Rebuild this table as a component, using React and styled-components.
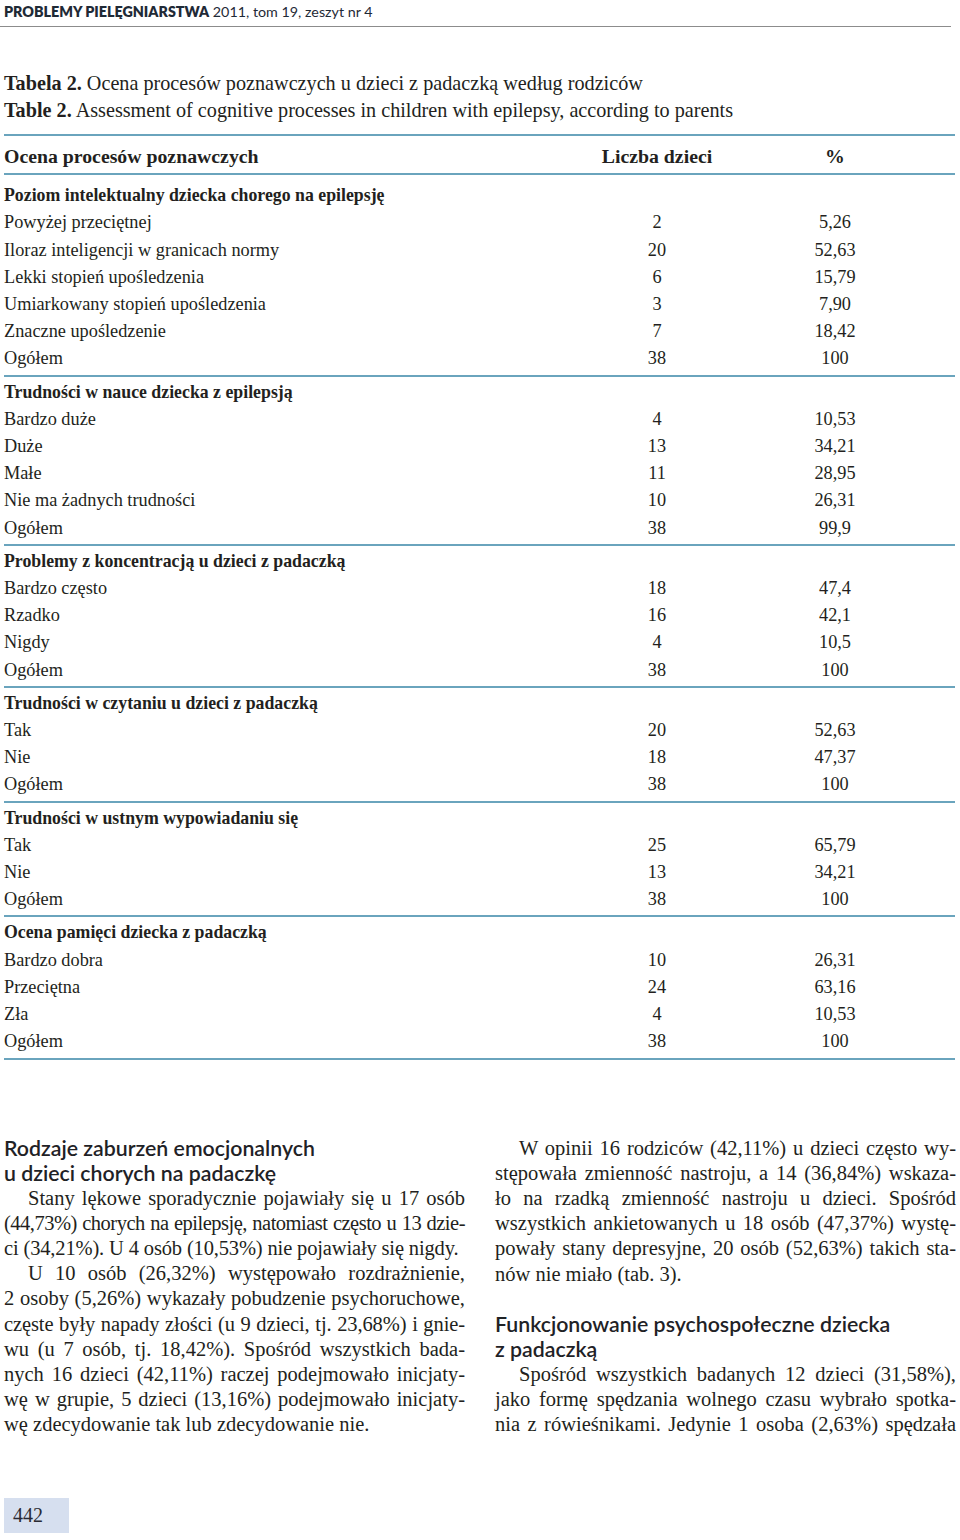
import styled, { createGlobalStyle } from 'styled-components';

const GlobalStyle = createGlobalStyle`
  body {
    margin: 0;
    background: #fff;
    color: #231f20;
    font-family: 'Liberation Serif', 'Times New Roman', serif;
  }
`;

/* Page frame */

const Page = styled.div`
  width: 960px;
  padding: 0 4px 0 4px;
  box-sizing: border-box;
`;

const RunningHead = styled.header`
  height: 27px;
  margin-left: -4px;
  margin-right: 5px;
  padding: 2px 0 0 4px;
  box-sizing: border-box;
  border-bottom: 1px solid #8c8c8c;
  font-family: Lato, 'Noto Sans', sans-serif;
  font-size: 14.3px;
  line-height: 20px;
  color: #1f2a36;

  & b {
    font-weight: 800;
  }
`;

const Caption = styled.div`
  margin: 43px 0 10px;
  font-family: 'Liberation Serif', serif;
  font-size: 20.2px;
  line-height: 27px;

  & b {
    font-weight: 700;
  }
`;

/* Table */

const Table = styled.div`
  border-top: 2px solid #6aa4bd;
  margin-right: 1px;
`;

const Row = styled.div`
  display: grid;
  grid-template-columns: 1fr 178px 178px;
  padding-right: 31px;
  font-size: ${(p) => (p.$bold ? '17.8px' : '18.3px')};
  line-height: 27.2px;
  font-weight: ${(p) => (p.$bold ? 700 : 400)};
`;

const HeadRow = styled(Row)`
  padding-top: 7px;
  padding-bottom: 3px;
  font-size: 19.8px;
  border-bottom: 2px solid #6aa4bd;
`;

const Num = styled.span`
  text-align: center;
`;

const Section = styled.div`
  padding: ${(p) => (p.$first ? '7px' : '2px')} 0 2px;
  border-bottom: 2px solid #6aa4bd;
`;

/* Article text */

const Columns = styled.div`
  display: grid;
  grid-template-columns: 461px 461px;
  column-gap: 30px;
  margin-top: 76px;
`;

const Column = styled.div`
  display: flex;
  flex-direction: column;
`;

const Heading = styled.h3`
  margin: ${(p) => (p.$gap ? '25px' : '0')} 0 0;
  font-family: Lato, 'Noto Sans', sans-serif;
  font-weight: 600;
  font-size: 21.3px;
  line-height: 25px;
  color: #1f2226;
`;

const Para = styled.div`
  font-size: 20.5px;
  line-height: 25.2px;
`;

const Line = styled.div`
  text-align: justify;
  text-align-last: ${(p) => (p.$last ? 'left' : 'justify')};
  text-indent: ${(p) => (p.$indent ? '24px' : '0')};
  letter-spacing: ${(p) => p.$squeeze || 0}px;
  white-space: nowrap;
`;

const PageNo = styled.div`
  margin-top: 60px;
  width: 65px;
  height: 35px;
  padding-left: 9px;
  box-sizing: border-box;
  background: #d6dfef;
  font-family: 'Liberation Serif', serif;
  font-size: 20px;
  line-height: 35px;
  color: #2a2a33;
`;

const sections = [
  {
    title: 'Poziom intelektualny dziecka chorego na epilepsję',
    rows: [
      ['Powyżej przeciętnej', '2', '5,26'],
      ['Iloraz inteligencji w granicach normy', '20', '52,63'],
      ['Lekki stopień upośledzenia', '6', '15,79'],
      ['Umiarkowany stopień upośledzenia', '3', '7,90'],
      ['Znaczne upośledzenie', '7', '18,42'],
      ['Ogółem', '38', '100'],
    ],
  },
  {
    title: 'Trudności w nauce dziecka z epilepsją',
    rows: [
      ['Bardzo duże', '4', '10,53'],
      ['Duże', '13', '34,21'],
      ['Małe', '11', '28,95'],
      ['Nie ma żadnych trudności', '10', '26,31'],
      ['Ogółem', '38', '99,9'],
    ],
  },
  {
    title: 'Problemy z koncentracją u dzieci z padaczką',
    rows: [
      ['Bardzo często', '18', '47,4'],
      ['Rzadko', '16', '42,1'],
      ['Nigdy', '4', '10,5'],
      ['Ogółem', '38', '100'],
    ],
  },
  {
    title: 'Trudności w czytaniu u dzieci z padaczką',
    rows: [
      ['Tak', '20', '52,63'],
      ['Nie', '18', '47,37'],
      ['Ogółem', '38', '100'],
    ],
  },
  {
    title: 'Trudności w ustnym wypowiadaniu się',
    rows: [
      ['Tak', '25', '65,79'],
      ['Nie', '13', '34,21'],
      ['Ogółem', '38', '100'],
    ],
  },
  {
    title: 'Ocena pamięci dziecka z padaczką',
    rows: [
      ['Bardzo dobra', '10', '26,31'],
      ['Przeciętna', '24', '63,16'],
      ['Zła', '4', '10,53'],
      ['Ogółem', '38', '100'],
    ],
  },
];

// a line is either a string or [text, letterSpacing] for lines set tighter
const Paragraph = ({ lines, open = false }) => (
  <Para>
    {lines.map((line, i) => {
      const [text, squeeze] = Array.isArray(line) ? line : [line, 0];
      return (
        <Line
          key={i}
          $indent={i === 0}
          $squeeze={squeeze}
          $last={!open && i === lines.length - 1}
        >
          {text}
        </Line>
      );
    })}
  </Para>
);

export default function App() {
  return (
    <Page>
      <GlobalStyle />
      <RunningHead>
        <b>PROBLEMY PIELĘGNIARSTWA</b> 2011, tom 19, zeszyt nr 4
      </RunningHead>

      <Caption>
        <div>
          <b>Tabela 2.</b> Ocena procesów poznawczych u dzieci z padaczką według rodziców
        </div>
        <div>
          <b>Table 2.</b> Assessment of cognitive processes in children with epilepsy, according to parents
        </div>
      </Caption>

      <Table>
        <HeadRow $bold>
          <span>Ocena procesów poznawczych</span>
          <Num>Liczba dzieci</Num>
          <Num>%</Num>
        </HeadRow>
        {sections.map((s, i) => (
          <Section key={s.title} $first={i === 0}>
            <Row $bold>
              <span>{s.title}</span>
            </Row>
            {s.rows.map(([label, n, pct]) => (
              <Row key={label}>
                <span>{label}</span>
                <Num>{n}</Num>
                <Num>{pct}</Num>
              </Row>
            ))}
          </Section>
        ))}
      </Table>

      <Columns>
        <Column>
          <Heading>
            Rodzaje zaburzeń emocjonalnych
            <br />u dzieci chorych na padaczkę
          </Heading>
          <Paragraph
            lines={[
              'Stany lękowe sporadycznie pojawiały się u 17 osób',
              ['(44,73%) chorych na epilepsję, natomiast często u 13 dzie-', -0.5],
              ['ci (34,21%). U 4 osób (10,53%) nie pojawiały się nigdy.', -0.15],
            ]}
          />
          <Paragraph
            lines={[
              'U 10 osób (26,32%) występowało rozdrażnienie,',
              '2 osoby (5,26%) wykazały pobudzenie psychoruchowe,',
              ['częste były napady złości (u 9 dzieci, tj. 23,68%) i gnie-', -0.1],
              'wu (u 7 osób, tj. 18,42%). Spośród wszystkich bada-',
              'nych 16 dzieci (42,11%) raczej podejmowało inicjaty-',
              'wę w grupie, 5 dzieci (13,16%) podejmowało inicjaty-',
              'wę zdecydowanie tak lub zdecydowanie nie.',
            ]}
          />
        </Column>
        <Column>
          <Paragraph
            lines={[
              'W opinii 16 rodziców (42,11%) u dzieci często wy-',
              'stępowała zmienność nastroju, a 14 (36,84%) wskaza-',
              'ło na rzadką zmienność nastroju u dzieci. Spośród',
              'wszystkich ankietowanych u 18 osób (47,37%) wystę-',
              'powały stany depresyjne, 20 osób (52,63%) takich sta-',
              'nów nie miało (tab. 3).',
            ]}
          />
          <Heading $gap>
            Funkcjonowanie psychospołeczne dziecka
            <br />z padaczką
          </Heading>
          <Paragraph
            open
            lines={[
              'Spośród wszystkich badanych 12 dzieci (31,58%),',
              'jako formę spędzania wolnego czasu wybrało spotka-',
              'nia z rówieśnikami. Jedynie 1 osoba (2,63%) spędzała',
            ]}
          />
        </Column>
      </Columns>

      <PageNo>442</PageNo>
    </Page>
  );
}
